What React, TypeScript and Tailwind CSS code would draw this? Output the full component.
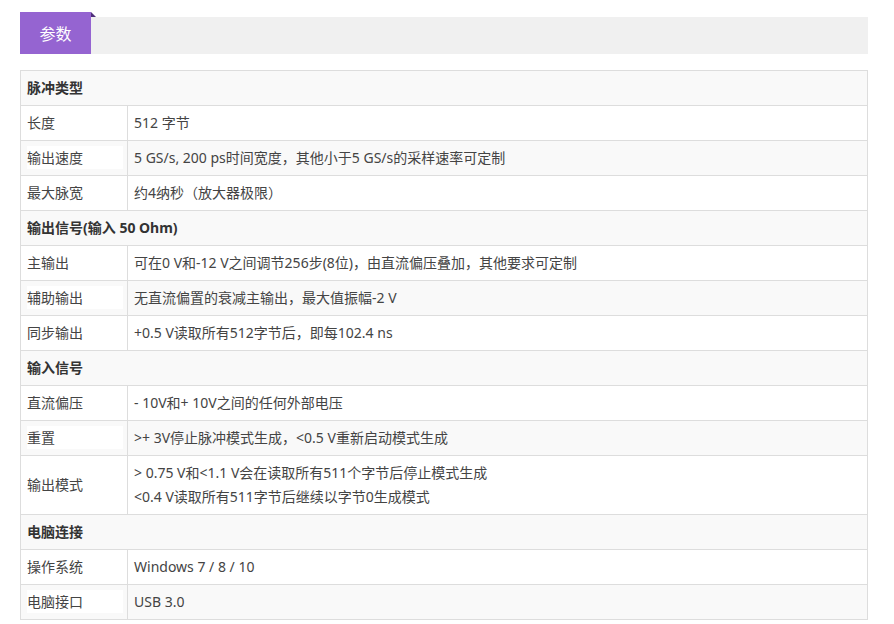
import React from "react";

type Row =
  | { kind: "head"; label: string }
  | { kind: "row"; label: string; value: string[] };

const rows: Row[] = [
  { kind: "head", label: "脉冲类型" },
  { kind: "row", label: "长度", value: ["512 字节"] },
  { kind: "row", label: "输出速度", value: ["5 GS/s, 200 ps时间宽度，其他小于5 GS/s的采样速率可定制"] },
  { kind: "row", label: "最大脉宽", value: ["约4纳秒（放大器极限）"] },
  { kind: "head", label: "输出信号(输入 50 Ohm)" },
  { kind: "row", label: "主输出", value: ["可在0 V和-12 V之间调节256步(8位)，由直流偏压叠加，其他要求可定制"] },
  { kind: "row", label: "辅助输出", value: ["无直流偏置的衰减主输出，最大值振幅-2 V"] },
  { kind: "row", label: "同步输出", value: ["+0.5 V读取所有512字节后，即每102.4 ns"] },
  { kind: "head", label: "输入信号" },
  { kind: "row", label: "直流偏压", value: ["- 10V和+ 10V之间的任何外部电压"] },
  { kind: "row", label: "重置", value: [">+ 3V停止脉冲模式生成，<0.5 V重新启动模式生成"] },
  {
    kind: "row",
    label: "输出模式",
    value: ["> 0.75 V和<1.1 V会在读取所有511个字节后停止模式生成", "<0.4 V读取所有511字节后继续以字节0生成模式"],
  },
  { kind: "head", label: "电脑连接" },
  { kind: "row", label: "操作系统", value: ["Windows 7 / 8 / 10"] },
  { kind: "row", label: "电脑接口", value: ["USB 3.0"] },
];

export default function App() {
  return (
    <div
      className="w-[894px] h-[624px] bg-white text-[14px] text-[#444]"
      style={{ fontFamily: '"Noto Sans", "Noto Sans CJK SC", sans-serif' }}
    >
      <div className="pt-[12px] px-[20px] w-[888px]">
        <div className="relative flex items-end h-[42px]">
          <div className="absolute left-0 right-0 top-[5px] bottom-0 bg-[#f0f0f0]" />
          <div className="relative w-[71px] h-[42px] bg-[#9564d1] text-white text-[16px] flex items-center justify-center pt-[1px]">
            参数
          </div>
          <svg className="absolute left-[71px] top-0" width="6" height="6" viewBox="0 0 6 6">
            <polygon points="0,0 5,5 0,5" fill="#4e2f7a" />
          </svg>
        </div>
        <table className="mt-[16px] w-[848px] border-collapse border border-[#dddddd] table-fixed">
          <colgroup>
            <col className="w-[107px]" />
            <col />
          </colgroup>
          <tbody>
            {rows.map((r, i) => {
              const gray = i % 2 === 0;
              if (r.kind === "head") {
                return (
                  <tr key={i} className="bg-[#f9f9f9]">
                    <td colSpan={2} className="border border-[#dddddd] px-[6px] py-[5px] leading-[24px] font-bold text-[#333]">
                      {r.label}
                    </td>
                  </tr>
                );
              }
              return (
                <tr key={i} className={gray ? "bg-[#f9f9f9]" : "bg-white"}>
                  <td className="border border-[#dddddd] px-[6px] py-[5px] leading-[24px] align-middle whitespace-nowrap">
                    {gray ? (
                      <span className="inline-block bg-white w-[96px] leading-[23px]">{r.label}</span>
                    ) : (
                      r.label
                    )}
                  </td>
                  <td className="border border-[#dddddd] px-[6px] py-[5px] leading-[24px]">
                    {r.value.map((v, j) => (
                      <div key={j}>{v}</div>
                    ))}
                  </td>
                </tr>
              );
            })}
          </tbody>
        </table>
      </div>
    </div>
  );
}
